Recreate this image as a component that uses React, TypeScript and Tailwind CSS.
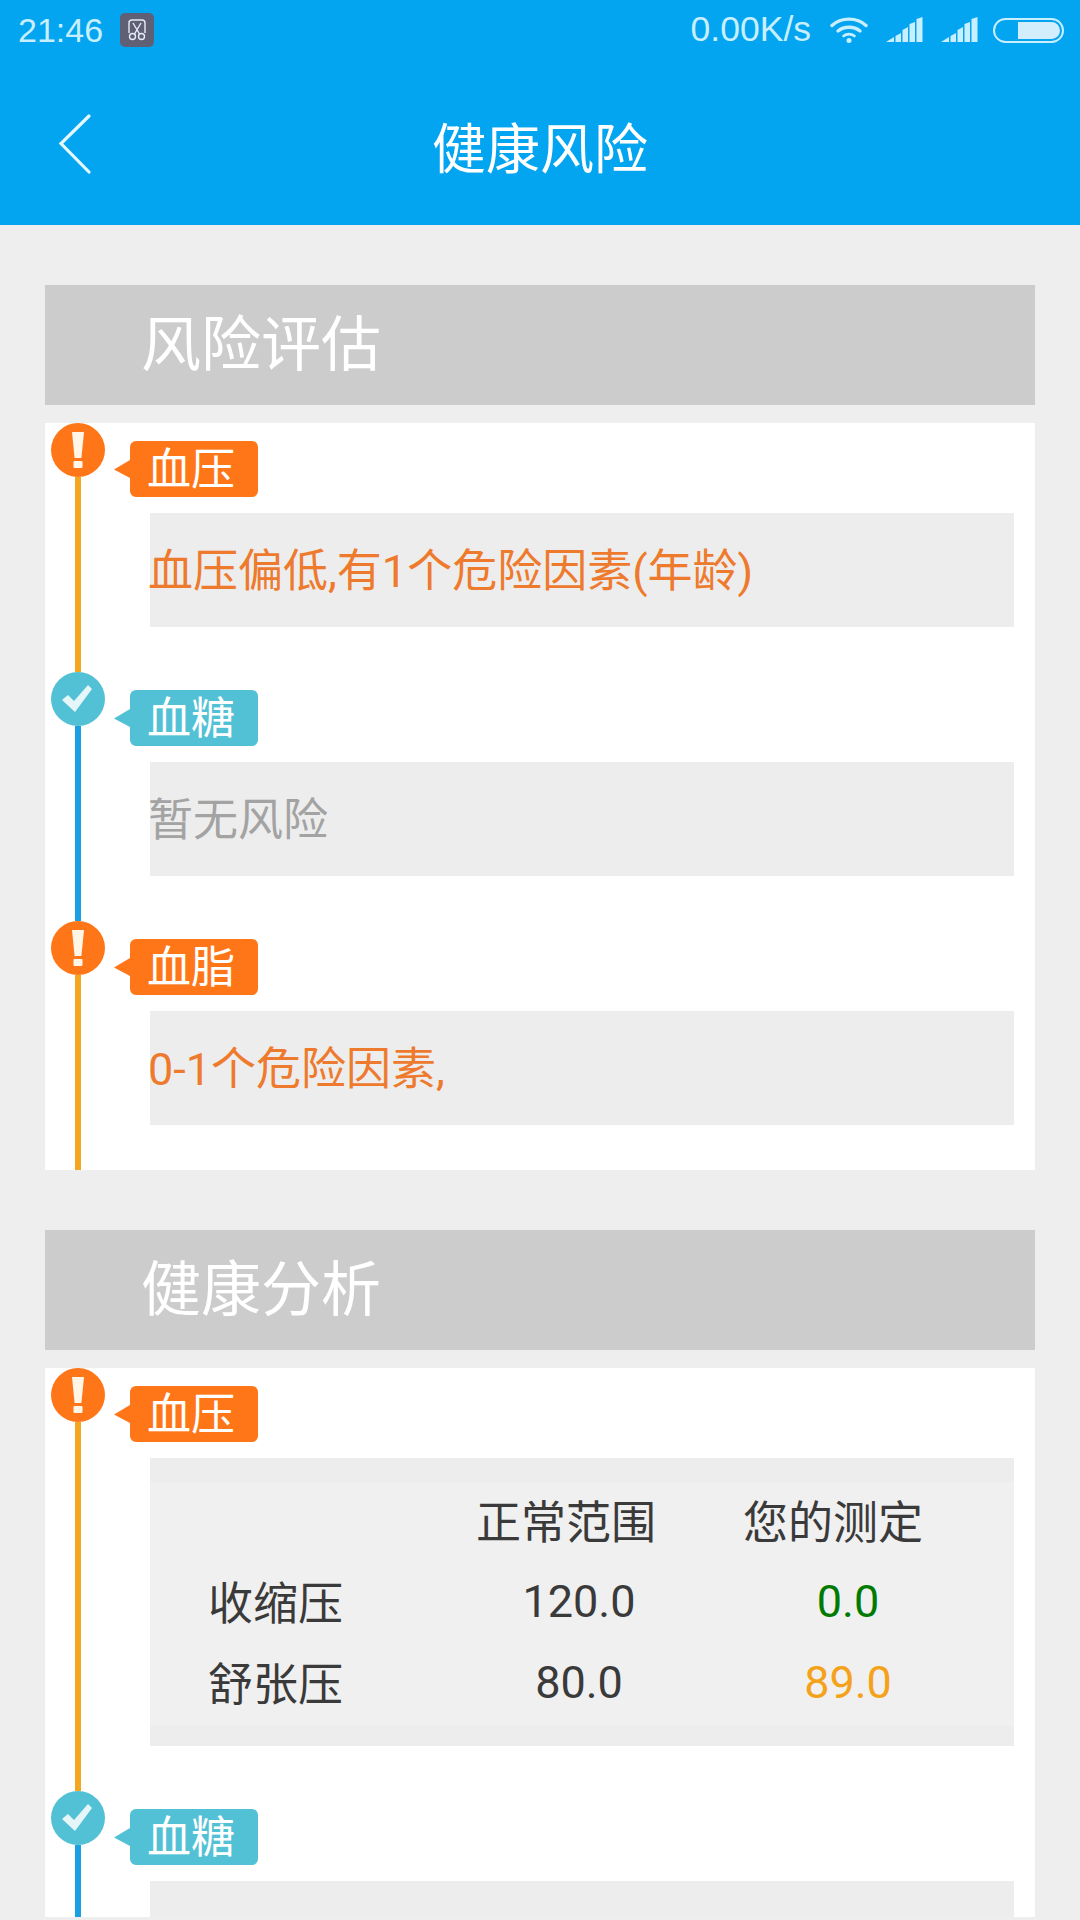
import React from 'react';

const cjk = "font-['Roboto','Noto_Sans_CJK_SC',sans-serif]";

const AlertIcon = () => (
  <div className="w-[54px] h-[54px] rounded-full bg-[#ff7619] flex items-center justify-center shrink-0">
    <svg viewBox="0 0 54 54" className="w-[54px] h-[54px]">
      <path d="M21 9h12l-2.6 26h-6.8z" fill="#fff6e8" />
      <rect x="22.5" y="38" width="9" height="7" rx="1" fill="#fff6e8" />
    </svg>
  </div>
);

const CheckIcon = () => (
  <div className="w-[54px] h-[54px] rounded-full bg-[#53c1d5] flex items-center justify-center shrink-0">
    <svg viewBox="0 0 54 54" className="w-[54px] h-[54px]">
      <path d="M11 28l6-5 6 6 14-16 4 4-17 23z" fill="#ffffff" fillOpacity="0.85" />
    </svg>
  </div>
);

interface RowProps {
  kind: 'alert' | 'ok';
  label: string;
  children: React.ReactNode;
}

const Row = ({ kind, label, children }: RowProps) => {
  const alert = kind === 'alert';
  return (
    <div className="flex">
      <div className="ml-[6px] w-[54px] flex flex-col items-center shrink-0">
        {alert ? <AlertIcon /> : <CheckIcon />}
        <div className={`w-[6px] flex-1 ${alert ? 'bg-[#f3a61f]' : 'bg-[#1a9fe0]'}`} />
      </div>
      <div className="flex-1 ml-[9px] pt-[18px] pb-[45px] pr-[21px]">
        <div className="flex items-center">
          <svg viewBox="0 0 16 18" className="w-[16px] h-[18px] shrink-0">
            <path d="M0 9.5L16 0v18z" fill={alert ? '#ff7619' : '#53c1d5'} />
          </svg>
          <div
            className={`w-[128px] h-[56px] rounded-[6px] pl-[17px] pt-[1px] flex items-center text-[44px] leading-none text-white ${
              alert ? 'bg-[#ff7619]' : 'bg-[#53c1d5]'
            }`}
          >
            {label}
          </div>
        </div>
        <div className="ml-[36px] mt-[16px]">{children}</div>
      </div>
    </div>
  );
};

const TextBox = ({ color, text }: { color: string; text: string }) => (
  <div className={`h-[114px] bg-[#ededed] pt-[2px] flex items-center text-[45px] leading-none ${color}`}>
    <span className="ml-[-2px]">{text}</span>
  </div>
);

const SectionTitle = ({ text }: { text: string }) => (
  <div className="h-[120px] bg-[#cccccc] pl-[96px] pt-[2px] flex items-center text-[60px] leading-none text-white">
    {text}
  </div>
);

const BpTable = () => (
  <div className="h-[288px] bg-[#ededed] pt-[24px] pb-[20px]">
    <div className="h-[244px] bg-[#f0f0f0] pl-[58px] text-[45px] leading-none text-[#3a3a3a]">
      <div className="h-[82px] flex items-center pl-[268px]">
        <div className="w-[267px]">正常范围</div>
        <div>您的测定</div>
      </div>
      <div className="h-[80px] flex items-center">
        <div className="w-[269px]">收缩压</div>
        <div className="w-[204px] text-center mt-[-6px]">120.0</div>
        <div className="w-[63px]" />
        <div className="w-[208px] text-center mt-[-6px] text-[#007a00]">0.0</div>
      </div>
      <div className="h-[82px] flex items-center">
        <div className="w-[269px]">舒张压</div>
        <div className="w-[204px] text-center mt-[-6px]">80.0</div>
        <div className="w-[63px]" />
        <div className="w-[208px] text-center mt-[-6px] text-[#f5a21b]">89.0</div>
      </div>
    </div>
  </div>
);

export default function App() {
  return (
    <div className={`h-[1920px] w-[1080px] overflow-hidden bg-[#eeeeee] ${cjk}`}>
      {/* Header */}
      <div className="h-[225px] bg-[#03a5f0]">
        <div className="h-[60px] flex items-center pl-[18px] pr-[16px] text-[#c8efff] font-['Liberation_Sans',sans-serif]">
          <span className="text-[34px]">21:46</span>
          <div className="ml-[17px] w-[34px] h-[34px] rounded-[5px] bg-[#5f6075] flex items-center justify-center">
            <svg viewBox="0 0 24 24" className="w-[24px] h-[24px]" fill="none" stroke="#e8ecf5" strokeWidth="1.4">
              <path d="M4 15V5a3 3 0 0 1 3-3h10a3 3 0 0 1 3 3v10" />
              <path d="M8 5l6.5 11M16 5L9.5 16" />
              <circle cx="7.5" cy="18.5" r="3" />
              <circle cx="16.5" cy="18.5" r="3" />
            </svg>
          </div>
          <div className="flex-1" />
          <span className="text-[35.5px]">0.00K/s</span>
          <svg viewBox="0 0 38 26" className="ml-[19px] w-[38px] h-[26px]" fill="none" stroke="#c8efff" strokeWidth="3.4" strokeLinecap="round">
            <path d="M2 8.5C11 0 27 0 36 8.5" />
            <path d="M8 14c6-5 16-5 22 0" />
            <path d="M13.5 19c3-2.5 8-2.5 11 0" strokeWidth="2.6" />
            <circle cx="19" cy="23.5" r="2.5" fill="#c8efff" stroke="none" />
          </svg>
          <svg viewBox="0 0 37 26" className="ml-[18px] w-[37px] h-[26px]" fill="#c8efff">
            <path d="M0 25l8-5v5zM9.5 19l5.5-3v9H9.5zM16.5 13l5.5-3v15h-5.5zM23.5 7l5.5-2v20h-5.5zM30.5 2l6-2v25h-6z" />
          </svg>
          <svg viewBox="0 0 37 26" className="ml-[18px] w-[37px] h-[26px]" fill="#c8efff">
            <path d="M0 25l8-5v5zM9.5 19l5.5-3v9H9.5zM16.5 13l5.5-3v15h-5.5zM23.5 7l5.5-2v20h-5.5zM30.5 2l6-2v25h-6z" />
          </svg>
          <div className="ml-[15px] w-[71px] h-[25px] rounded-full border-2 border-[#c8efff] p-[2px] flex justify-end">
            <div className="w-[42px] h-full rounded-r-full rounded-l-[2px] bg-[#d2eefc]" />
          </div>
        </div>
        <div className="relative h-[165px] flex items-center justify-center text-[54px] leading-none text-white">
          <svg viewBox="0 0 34 60" className="absolute left-[58px] top-[54px] w-[34px] h-[60px]" fill="none" stroke="#e6f8ff" strokeWidth="3.2" strokeLinecap="round">
            <path d="M31 2L3 29.5 31 58" />
          </svg>
          <span className="mt-[16px]">健康风险</span>
        </div>
      </div>

      <div className="mx-[45px] mt-[60px]">
        <SectionTitle text="风险评估" />
        <div className="mt-[18px] bg-white">
          <Row kind="alert" label="血压">
            <TextBox color="text-[#ee7b2d]" text="血压偏低,有1个危险因素(年龄)" />
          </Row>
          <Row kind="ok" label="血糖">
            <TextBox color="text-[#a3a3a3]" text="暂无风险" />
          </Row>
          <Row kind="alert" label="血脂">
            <TextBox color="text-[#ee7b2d]" text="0-1个危险因素," />
          </Row>
        </div>

        <div className="mt-[60px]">
          <SectionTitle text="健康分析" />
        </div>
        <div className="mt-[18px] h-[549px] overflow-hidden bg-white">
          <Row kind="alert" label="血压">
            <BpTable />
          </Row>
          <Row kind="ok" label="血糖">
            <div className="h-[200px] bg-[#ededed]" />
          </Row>
        </div>
      </div>
    </div>
  );
}
